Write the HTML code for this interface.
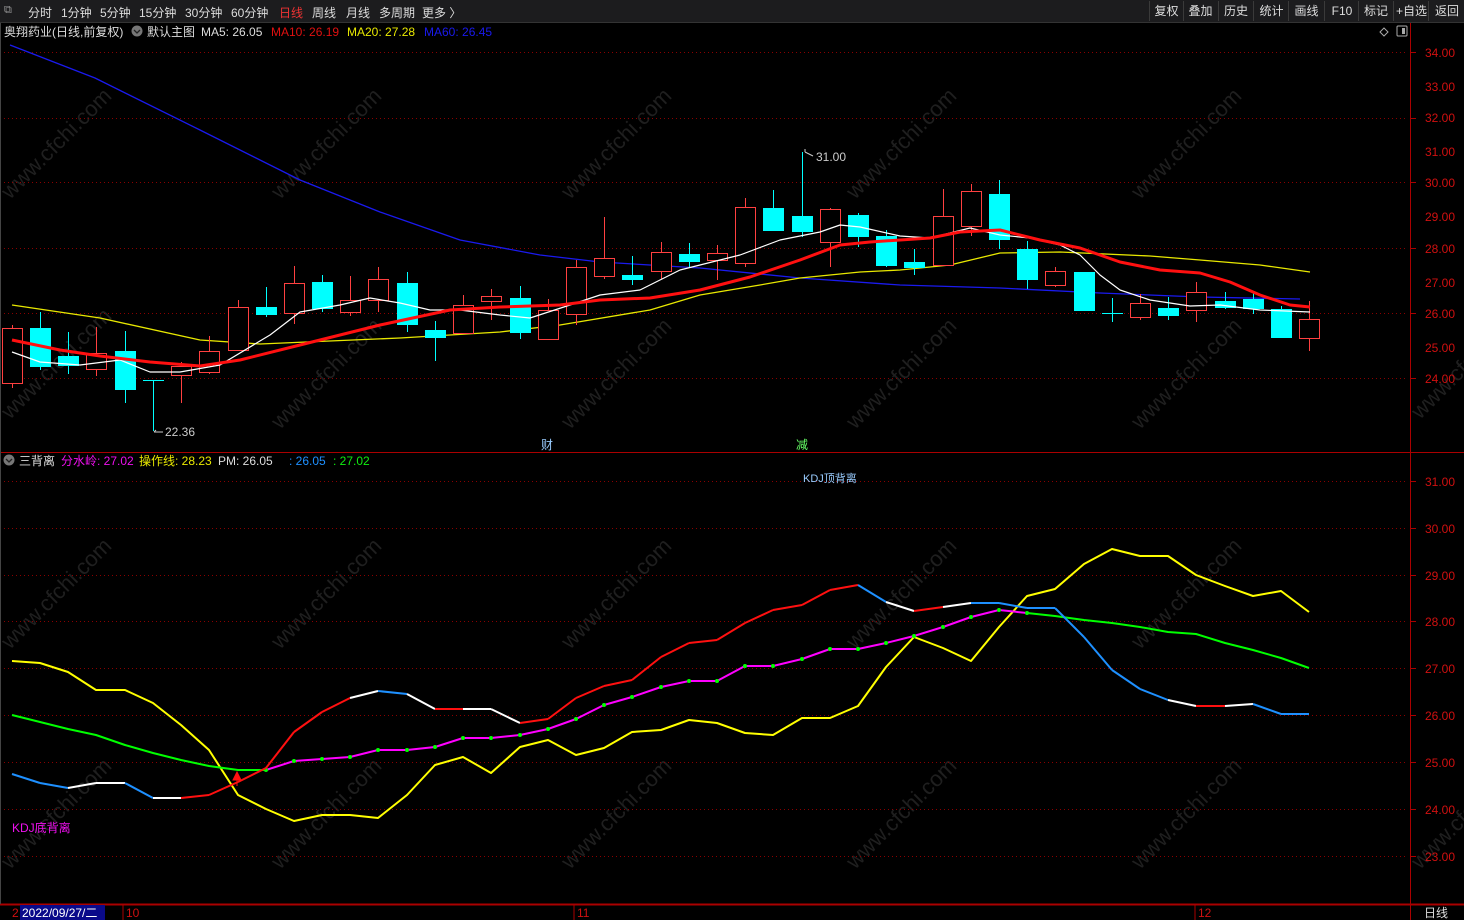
<!DOCTYPE html>
<html><head><meta charset="utf-8"><style>
html,body{margin:0;padding:0;background:#000;width:1464px;height:920px;overflow:hidden;font-family:"Liberation Sans","Noto Sans CJK SC",sans-serif;}
#top{position:absolute;left:0;top:0;width:1464px;height:22px;background:#1c1c1e;border-bottom:1px solid #333;}
.t{position:absolute;font-size:12px;white-space:nowrap;}
.btn{position:absolute;top:1px;height:20px;line-height:20px;font-size:12px;color:#ddd;text-align:center;border-left:1px solid #3a3a3a;}
svg{position:absolute;left:0;top:0;}
</style></head><body>
<div id="top">
<span class="t" style="left:4px;top:4px;color:#999;font-size:11px">⧉</span>
<span class="t" style="left:28px;top:4px;color:#ddd">分时</span>
<span class="t" style="left:61px;top:4px;color:#ddd">1分钟</span>
<span class="t" style="left:100px;top:4px;color:#ddd">5分钟</span>
<span class="t" style="left:139px;top:4px;color:#ddd">15分钟</span>
<span class="t" style="left:185px;top:4px;color:#ddd">30分钟</span>
<span class="t" style="left:231px;top:4px;color:#ddd">60分钟</span>
<span class="t" style="left:279px;top:4px;color:#ee3333">日线</span>
<span class="t" style="left:312px;top:4px;color:#ddd">周线</span>
<span class="t" style="left:346px;top:4px;color:#ddd">月线</span>
<span class="t" style="left:379px;top:4px;color:#ddd">多周期</span>
<span class="t" style="left:422px;top:4px;color:#ddd">更多 〉</span>
<div class="btn" style="left:1149px;width:33px">复权</div>
<div class="btn" style="left:1183px;width:33px">叠加</div>
<div class="btn" style="left:1218px;width:34px">历史</div>
<div class="btn" style="left:1253px;width:35px">统计</div>
<div class="btn" style="left:1288px;width:35px">画线</div>
<div class="btn" style="left:1324px;width:34px">F10</div>
<div class="btn" style="left:1358px;width:34px">标记</div>
<div class="btn" style="left:1393px;width:35px">+自选</div>
<div class="btn" style="left:1428px;width:36px">返回</div>
</div>
<svg id="s" width="1464" height="920" viewBox="0 0 1464 920" style="top:0">
<g id="wm" fill="#1f1f1f" font-size="22" font-family="Liberation Sans,sans-serif"></g>
<g id="grid"></g>
<g id="draw"></g>
<line x1="1410.5" y1="23" x2="1410.5" y2="920" stroke="#a00" />
<line x1="0" y1="452.5" x2="1464" y2="452.5" stroke="#a00"/>
<line x1="0" y1="904.5" x2="1464" y2="904.5" stroke="#a00" stroke-width="2"/>
<line x1="0.5" y1="23" x2="0.5" y2="904" stroke="#444"/>
<g font-size="12" fill="#d01010" font-family="Liberation Sans,sans-serif">
<text x="1425" y="57">34.00</text><text x="1425" y="91">33.00</text><text x="1425" y="122">32.00</text>
<text x="1425" y="156">31.00</text><text x="1425" y="187">30.00</text><text x="1425" y="221">29.00</text>
<text x="1425" y="253">28.00</text><text x="1425" y="287">27.00</text><text x="1425" y="318">26.00</text>
<text x="1425" y="352">25.00</text><text x="1425" y="383">24.00</text>
<text x="1425" y="486">31.00</text><text x="1425" y="533">30.00</text><text x="1425" y="580">29.00</text>
<text x="1425" y="626">28.00</text><text x="1425" y="673">27.00</text><text x="1425" y="720">26.00</text>
<text x="1425" y="767">25.00</text><text x="1425" y="814">24.00</text><text x="1425" y="861">23.00</text>
</g>
<g font-size="12" font-family="Liberation Sans,'Noto Sans CJK SC',sans-serif">
<text x="4" y="36" fill="#ddd">奥翔药业(日线,前复权)</text>
<circle cx="137" cy="31" r="5.5" fill="#777"/><path d="M134 30l3 3 3-3" stroke="#222" fill="none" stroke-width="1.3"/>
<text x="147" y="36" fill="#ddd">默认主图</text>
<text x="201" y="36" fill="#ddd">MA5: 26.05</text>
<text x="271" y="36" fill="#e01010">MA10: 26.19</text>
<text x="347" y="36" fill="#e8e800">MA20: 27.28</text>
<text x="424" y="36" fill="#1a1aee">MA60: 26.45</text>
<circle cx="9" cy="460" r="5.5" fill="#777"/><path d="M6 459l3 3 3-3" stroke="#222" fill="none" stroke-width="1.3"/>
<text x="19" y="465" fill="#ddd">三背离</text>
<text x="61" y="465" fill="#ee10ee">分水岭: 27.02</text>
<text x="139" y="465" fill="#e8e800">操作线: 28.23</text>
<text x="218" y="465" fill="#ddd">PM: 26.05</text>
<text x="289" y="465" fill="#1e90ff">: 26.05</text>
<text x="333" y="465" fill="#10ee10">: 27.02</text>
<text x="803" y="482" fill="#9cf" font-size="11">KDJ顶背离</text>
<text x="12" y="832" fill="#ee10ee">KDJ底背离</text>
<text x="816" y="161" fill="#ccc">31.00</text>
<text x="165" y="436" fill="#ccc">22.36</text>
<text x="541" y="449" fill="#9cf">财</text>
<text x="796" y="449" fill="#6f6">减</text>
</g>
<path d="M813 156l-8-4M805 152v-3M163 432h-9M154 432l2-2" stroke="#ccc" fill="none"/>
<path d="M1384 28l4 4-4 4-4-4z" stroke="#aaa" fill="none"/>
<rect x="1397" y="26" width="10" height="10" rx="1" stroke="#aaa" fill="none"/><rect x="1402" y="28" width="3" height="6" fill="#aaa"/>
<rect x="20" y="905" width="85" height="15" fill="#0a0a8a"/>
<g font-size="12" font-family="Liberation Sans,'Noto Sans CJK SC',sans-serif">
<text x="12" y="917" fill="#d01010">2</text>
<text x="22" y="917" fill="#fff">2022/09/27/二</text>
<text x="126" y="917" fill="#d01010">10</text>
<text x="577" y="917" fill="#d01010">11</text>
<text x="1198" y="917" fill="#d01010">12</text>
<text x="1424" y="917" fill="#ddd">日线</text>
</g>
<path d="M123 905v15M574 905v15M1195 905v15" stroke="#a00"/>
</svg>
<script>
var NS="http://www.w3.org/2000/svg";
function el(p,t,a){var e=document.createElementNS(NS,t);for(var k in a)e.setAttribute(k,a[k]);p.appendChild(e);return e;}
var g=document.getElementById('grid'),d=document.getElementById('draw'),wm=document.getElementById('wm');
[[0,200],[270,200],[560,200],[845,200],[1130,200],[0,420],[270,430],[560,430],[845,430],[1130,430],[0,650],[270,650],[560,650],[845,650],[1130,650],[0,870],[270,870],[560,870],[845,870],[1130,870],[1410,420],[1410,870]].forEach(function(p){
 var t=el(wm,'text',{x:p[0]+10,y:p[1],transform:'rotate(-45 '+(p[0]+10)+' '+p[1]+')'});t.textContent='www.cfchi.com';});
[52,118,182,248,313,378,481,528,575,621,668,715,762,809,856].forEach(function(y){
 el(g,'line',{x1:0,x2:1405,y1:y+.5,y2:y+.5,stroke:'#8a0000','stroke-dasharray':'1 3'});
 el(g,'line',{x1:1410,x2:1416,y1:y+.5,y2:y+.5,stroke:'#a00'});});
function pl(pts,c,w){el(d,'polyline',{points:pts.map(function(p){return p.join(',')}).join(' '),fill:'none',stroke:c,'stroke-width':w||1,'stroke-linejoin':'round'});}
pl([[10,45],[95,78],[200,130],[300,180],[380,212],[460,240],[540,255],[600,262],[700,268],[800,278],[900,285],[1000,288],[1100,293],[1200,297],[1300,299]],'#1a1aee',1.3);
pl([[12,305],[100,318],[200,340],[260,344],[400,338],[500,332],[560,325],[650,310],[700,295],[760,285],[800,278],[860,272],[900,270],[950,265],[1000,253],[1060,252],[1150,256],[1200,260],[1260,265],[1310,272]],'#e8e800',1.3);
var C=[[12,328,383,325,388,1],[40,328,366,312,370,0],[68,356,365,332,374,0],[96,353,369,327,376,1],[125,351,389,331,403,0],[153,380,382,381,431,2],[181,366,375,362,403,1],[209,351,372,336,374,1],[238,307,350,300,350,1],[266,307,314,287,317,0],[294,283,313,266,324,1],[322,282,308,275,312,0],[350,300,312,276,316,1],[378,279,300,267,312,1],[407,283,324,272,332,0],[435,330,337,321,361,0],[463,305,333,295,334,1],[491,296,301,289,320,1],[520,298,332,286,339,0],[548,310,339,299,339,1],[576,267,314,260,325,1],[604,258,276,217,279,1],[632,275,279,256,285,0],[661,252,271,242,279,1],[689,254,261,243,267,0],[717,253,260,245,280,1],[745,207,263,198,267,1],[773,208,230,190,231,0],[802,216,231,152,237,0],[830,209,242,208,267,1],[858,215,236,213,247,0],[886,236,265,230,267,0],[914,262,267,249,275,0],[943,216,265,189,265,1],[971,191,226,184,236,1],[999,194,239,180,249,0],[1027,249,279,241,289,0],[1055,271,285,267,287,1],[1084,272,310,272,310,0],[1112,313,315,298,322,2],[1140,303,317,294,320,1],[1168,308,315,297,320,0],[1196,292,310,282,322,1],[1225,301,307,292,309,0],[1253,299,308,291,314,0],[1281,309,337,306,337,0],[1309,319,338,301,351,1]];
C.forEach(function(c){var x=c[0];
 if(c[5]==2){el(d,'line',{x1:x+.5,x2:x+.5,y1:c[3],y2:c[4],stroke:'#00ffff'});el(d,'line',{x1:x-10,x2:x+11,y1:c[1]+.5,y2:c[1]+.5,stroke:'#00ffff'});return;}
 var col=c[5]?'#ff4040':'#00ffff';
 el(d,'line',{x1:x+.5,x2:x+.5,y1:c[3],y2:c[4],stroke:col});
 if(c[5])el(d,'rect',{x:x-9.5,y:c[1]+.5,width:20,height:c[2]-c[1],fill:'#000',stroke:col});
 else el(d,'rect',{x:x-10,y:c[1],width:21,height:c[2]-c[1]+1,fill:col});});
pl([[12,352],[40,362],[80,365],[120,360],[150,372],[180,372],[220,365],[270,335],[300,312],[340,305],[370,298],[400,303],[430,310],[460,310],[500,315],[530,318],[570,305],[600,295],[640,290],[680,270],[700,265],[740,255],[780,240],[820,232],[840,225],[860,227],[900,236],[930,238],[970,228],[1000,235],[1030,238],[1060,245],[1080,255],[1100,275],[1120,290],[1150,300],[1190,306],[1220,305],[1260,310],[1310,312]],'#fff',1.2);
pl([[12,340],[60,350],[100,356],[150,362],[200,366],[240,360],[300,345],[380,325],[450,310],[500,307],[560,305],[600,300],[650,298],[700,290],[750,277],[800,260],[840,245],[870,242],[930,238],[960,232],[1000,230],[1040,240],[1080,248],[1120,262],[1160,270],[1200,273],[1230,282],[1260,295],[1290,305],[1310,307]],'#ff1010',3);
var X=[];for(var i=0;i<47;i++)X.push(C[i][0]);
var Y=[661,663,672,690,690,703,725,750,795,809,821,815,815,818,795,765,757,773,747,740,755,748,732,730,720,723,733,735,718,718,706,667,637,648,661,627,596,589,564,549,556,556,575,586,596,591,612];
pl(X.map(function(x,i){return[x,Y[i]]}),'#ffff00',2);
var G=[715,722,729,735,745,753,760,766,770,770,761,759,757,750,750,747,738,738,735,729,719,705,697,687,681,681,666,666,659,649,649,643,636,627,617,610,613,616,620,623,627,632,634,643,650,658,668];
pl(X.slice(0,10).map(function(x,i){return[x,G[i]]}),'#00ff00',2);
pl(X.slice(9,37).map(function(x,i){return[x,G[i+9]]}),'#ff00ff',2);
pl(X.slice(36).map(function(x,i){return[x,G[i+36]]}),'#00ff00',2);
for(var i=9;i<37;i++)el(d,'circle',{cx:X[i],cy:G[i],r:2,fill:'#00ff00'});
var W=[774,783,788,783,783,798,798,795,782,768,732,712,698,691,694,709,709,709,723,719,698,686,680,657,643,640,623,610,605,590,585,602,611,607,603,603,608,608,637,670,689,700,706,706,704,714,714];
var WC='wbbwwbwrrrrrrwbwrwwrrrrrrrrrrrrbwrwbbbbbbbwrwbb';
var cm={w:'#ffffff',b:'#1e90ff',r:'#ff1010'};
for(var i=0;i<46;i++)pl([[X[i],W[i]],[X[i+1],W[i+1]]],cm[WC[i+1]],2);
el(d,'path',{d:'M237 772l-4 8h8z M237 780v6',fill:'#ff1010',stroke:'#ff1010'});
</script>
</body></html>
